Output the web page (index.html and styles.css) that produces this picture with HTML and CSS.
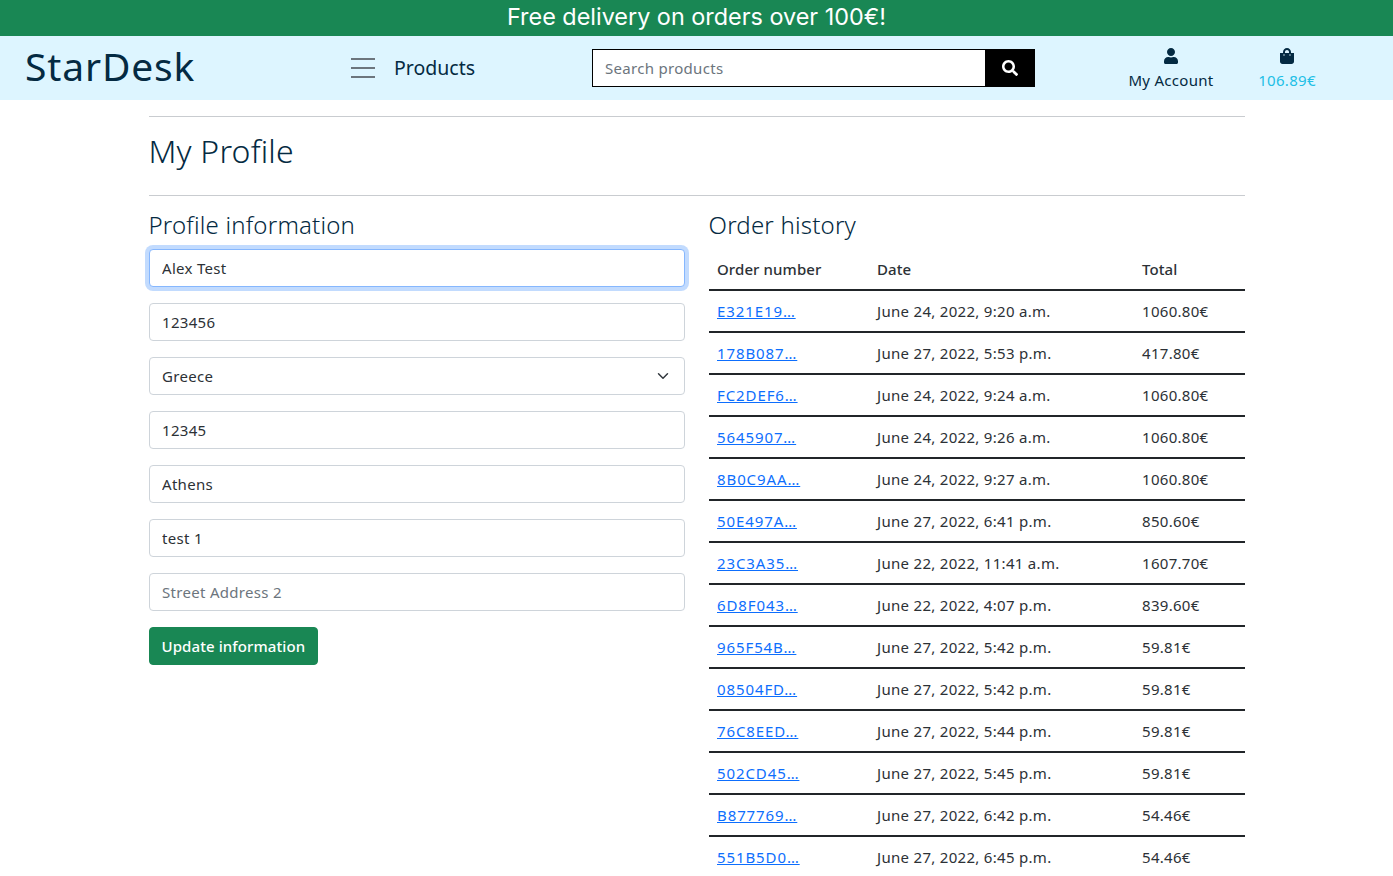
FILE: index.html
```html
<!DOCTYPE html>
<html lang="en">
<head>
<meta charset="UTF-8" />
<meta name="viewport" content="width=device-width, initial-scale=1" />
<title>StarDesk - My Profile</title>
<link rel="stylesheet" href="styles.css">
</head>
<body>

  <div class="promo-banner">Free delivery on orders over 100€!</div>

  <header class="site-header">
    <a class="logo" href="#">StarDesk</a>

    <a class="products-link" href="#">
      <span class="burger"><i></i><i></i><i></i></span>
      <span>Products</span>
    </a>

    <form class="search-form">
      <input type="text" placeholder="Search products" />
      <button type="button" aria-label="Search">
        <svg viewBox="0 0 512 512" width="16" height="16"><path fill="#fff" d="M505 442.7L405.3 343c-4.5-4.5-10.6-7-17-7H372c27.6-35.3 44-79.7 44-128C416 93.1 322.9 0 208 0S0 93.1 0 208s93.1 208 208 208c48.3 0 92.7-16.4 128-44v16.3c0 6.4 2.5 12.5 7 17l99.7 99.7c9.4 9.4 24.6 9.4 33.9 0l28.3-28.3c9.4-9.4 9.4-24.6.1-34zM208 336c-70.7 0-128-57.2-128-128 0-70.7 57.2-128 128-128 70.7 0 128 57.2 128 128 0 70.7-57.2 128-128 128z"/></svg>
      </button>
    </form>

    <nav class="header-links">
      <a class="header-link account-link" href="#">
        <svg viewBox="0 0 448 512" width="14" height="16"><path fill="#042a42" d="M224 256c70.7 0 128-57.3 128-128S294.7 0 224 0 96 57.3 96 128s57.3 128 128 128zm89.6 32h-16.7c-22.2 10.2-46.9 16-72.9 16s-50.6-5.8-72.9-16h-16.7C60.2 288 0 348.2 0 422.4V464c0 26.5 21.5 48 48 48h352c26.5 0 48-21.5 48-48v-41.6c0-74.2-60.2-134.4-134.4-134.4z"/></svg>
        <span>My Account</span>
      </a>
      <a class="header-link cart-link" href="#">
        <svg viewBox="0 0 448 512" width="14" height="16"><path fill="#042a42" d="M352 160v-32C352 57.42 294.579 0 224 0 153.42 0 96 57.42 96 128v32H0v272c0 44.183 35.817 80 80 80h288c44.183 0 80-35.817 80-80V160h-96zm-192-32c0-35.29 28.71-64 64-64s64 28.71 64 64v32H160v-32zm160 120c-13.255 0-24-10.745-24-24s10.745-24 24-24 24 10.745 24 24-10.745 24-24 24zm-192 0c-13.255 0-24-10.745-24-24s10.745-24 24-24 24 10.745 24 24-10.745 24-24 24z"/></svg>
        <span>106.89€</span>
      </a>
    </nav>
  </header>

  <main class="container">
    <hr />
    <h1>My Profile</h1>
    <hr />

    <div class="profile-grid">
      <section>
        <h2>Profile information</h2>
        <form class="profile-form">
          <input class="field field-focus" type="text" value="Alex Test" />
          <input class="field" type="text" value="123456" />
          <select class="field field-select">
            <option>Greece</option>
          </select>
          <input class="field" type="text" value="12345" />
          <input class="field" type="text" value="Athens" />
          <input class="field" type="text" value="test 1" />
          <input class="field" type="text" placeholder="Street Address 2" />
          <button class="update-btn" type="button">Update information</button>
        </form>
      </section>

      <section>
        <h2>Order history</h2>
        <table class="orders">
          <thead>
            <tr><th class="col-number">Order number</th><th class="col-date">Date</th><th>Total</th></tr>
          </thead>
          <tbody>
            <tr><td><a href="#">E321E19…</a></td><td>June 24, 2022, 9:20 a.m.</td><td>1060.80€</td></tr>
            <tr><td><a href="#">178B087…</a></td><td>June 27, 2022, 5:53 p.m.</td><td>417.80€</td></tr>
            <tr><td><a href="#">FC2DEF6…</a></td><td>June 24, 2022, 9:24 a.m.</td><td>1060.80€</td></tr>
            <tr><td><a href="#">5645907…</a></td><td>June 24, 2022, 9:26 a.m.</td><td>1060.80€</td></tr>
            <tr><td><a href="#">8B0C9AA…</a></td><td>June 24, 2022, 9:27 a.m.</td><td>1060.80€</td></tr>
            <tr><td><a href="#">50E497A…</a></td><td>June 27, 2022, 6:41 p.m.</td><td>850.60€</td></tr>
            <tr><td><a href="#">23C3A35…</a></td><td>June 22, 2022, 11:41 a.m.</td><td>1607.70€</td></tr>
            <tr><td><a href="#">6D8F043…</a></td><td>June 22, 2022, 4:07 p.m.</td><td>839.60€</td></tr>
            <tr><td><a href="#">965F54B…</a></td><td>June 27, 2022, 5:42 p.m.</td><td>59.81€</td></tr>
            <tr><td><a href="#">08504FD…</a></td><td>June 27, 2022, 5:42 p.m.</td><td>59.81€</td></tr>
            <tr><td><a href="#">76C8EED…</a></td><td>June 27, 2022, 5:44 p.m.</td><td>59.81€</td></tr>
            <tr><td><a href="#">502CD45…</a></td><td>June 27, 2022, 5:45 p.m.</td><td>59.81€</td></tr>
            <tr><td><a href="#">B877769…</a></td><td>June 27, 2022, 6:42 p.m.</td><td>54.46€</td></tr>
            <tr><td><a href="#">551B5D0…</a></td><td>June 27, 2022, 6:45 p.m.</td><td>54.46€</td></tr>
          </tbody>
        </table>
      </section>
    </div>
  </main>

</body>
</html>
```

FILE: styles.css
```css
* {
  box-sizing: border-box;
}

html {
  height: 100%;
  overflow: hidden;
}

body {
  font-family: "Noto Sans", "Open Sans", sans-serif;
  font-size: 15px;
  letter-spacing: .3px;
  margin: 0;
  background: #fff;
  color: #2c3136;
  height: 100%;
  overflow: hidden;
}

a {
  text-decoration: none;
}

/* Banner */
.promo-banner {
  height: 36px;
  background: #198754;
  color: #fff;
  font-family: "Inter", sans-serif;
  font-size: 23.4px;
  letter-spacing: 0;
  line-height: 34px;
  text-align: center;
}

/* Header */
.site-header {
  height: 64px;
  background: #ddf5ff;
  display: flex;
  align-items: center;
  padding-left: 25px;
}
.logo {
  width: 326px;
  margin-top: -6px;
  color: #042a42;
  font-size: 39px;
  letter-spacing: .85px;
}
.products-link {
  display: flex;
  align-items: center;
  gap: 19px;
  width: 241px;
  color: #042a42;
  font-size: 19.5px;
  letter-spacing: 0;
  line-height: 26px;
  margin-top: -1px;
}
.burger {
  display: flex;
  flex-direction: column;
  gap: 7px;
  width: 24px;
  margin-top: 1px;
}
.burger i {
  display: block;
  height: 2px;
  background: #6c757d;
}
.search-form {
  display: flex;
  width: 443px;
  height: 38px;
  border: 1px solid #000;
  background: #fff;
}
.search-form input {
  flex: 1;
  min-width: 0;
  border: none;
  outline: none;
  padding: 0 12px;
  font: inherit;
  letter-spacing: inherit;
}
.search-form input::placeholder {
  color: #6c757d;
}
.search-form button {
  width: 50px;
  margin: -1px -1px -1px 0;
  border: none;
  background: #000;
  display: flex;
  align-items: center;
  justify-content: center;
}
.header-links {
  display: flex;
  margin-left: 93px;
}
.header-link {
  display: flex;
  flex-direction: column;
  align-items: center;
  gap: 6px;
  margin-top: 2px;
  line-height: 20px;
}
.account-link {
  width: 86px;
  color: #042a42;
}
.cart-link {
  width: 60px;
  margin-left: 43px;
  color: #21bfe6;
}

/* Contenido */
.container {
  width: 1096px;
  margin: 0 auto;
  padding-top: 16px;
}
hr {
  margin: 0;
  border: none;
  border-top: 1px solid #c9ccd0;
}
h1 {
  margin: 0;
  height: 78px;
  color: #042a42;
  font-size: 32px;
  font-weight: 300;
  letter-spacing: .2px;
  line-height: 68px;
}
.profile-grid {
  display: grid;
  grid-template-columns: 1fr 1fr;
  gap: 24px;
  padding-top: 14px;
}
h2 {
  margin: 0 0 9px 0;
  color: #042a42;
  font-size: 24px;
  font-weight: 300;
  letter-spacing: .2px;
  line-height: 30px;
}

/* Formulario */
.profile-form {
  display: flex;
  flex-direction: column;
  gap: 16px;
  align-items: flex-start;
}
.field {
  display: block;
  width: 100%;
  height: 38px;
  padding: 0 12.5px;
  border: 1px solid #ced4da;
  border-radius: 4px;
  background: #fff;
  color: #2c3136;
  font: inherit;
  letter-spacing: inherit;
  outline: none;
}
.field::placeholder {
  color: #6c757d;
}
.field-focus {
  border-color: #86b7fe;
  box-shadow: 0 0 0 4px rgba(13, 110, 253, .25);
}
.field-select {
  appearance: none;
  background-image: url("data:image/svg+xml,%3csvg xmlns='http://www.w3.org/2000/svg' viewBox='0 0 16 16'%3e%3cpath fill='none' stroke='%23343a40' stroke-linecap='round' stroke-linejoin='round' stroke-width='2' d='M2 5l6 6 6-6'/%3e%3c/svg%3e");
  background-repeat: no-repeat;
  background-position: right 15px center;
  background-size: 12px 12px;
}
.update-btn {
  height: 38px;
  padding: 0 12px;
  border: 1px solid #198754;
  border-radius: 4px;
  background: #198754;
  color: #fff;
  font: inherit;
  font-weight: 500;
  letter-spacing: .1px;
}

/* Tabla de pedidos */
.orders {
  width: 100%;
  border-collapse: collapse;
}
.orders th,
.orders td {
  padding: 0 8.5px;
  height: 42px;
  text-align: left;
  border-bottom: 2px solid #212529;
}
.orders th {
  height: 41px;
  font-weight: 500;
  letter-spacing: .1px;
}
.orders td a {
  color: #0d6efd;
  letter-spacing: .9px;
  text-decoration: underline;
}
.col-number {
  width: 160px;
}
.col-date {
  width: 265px;
}
```
